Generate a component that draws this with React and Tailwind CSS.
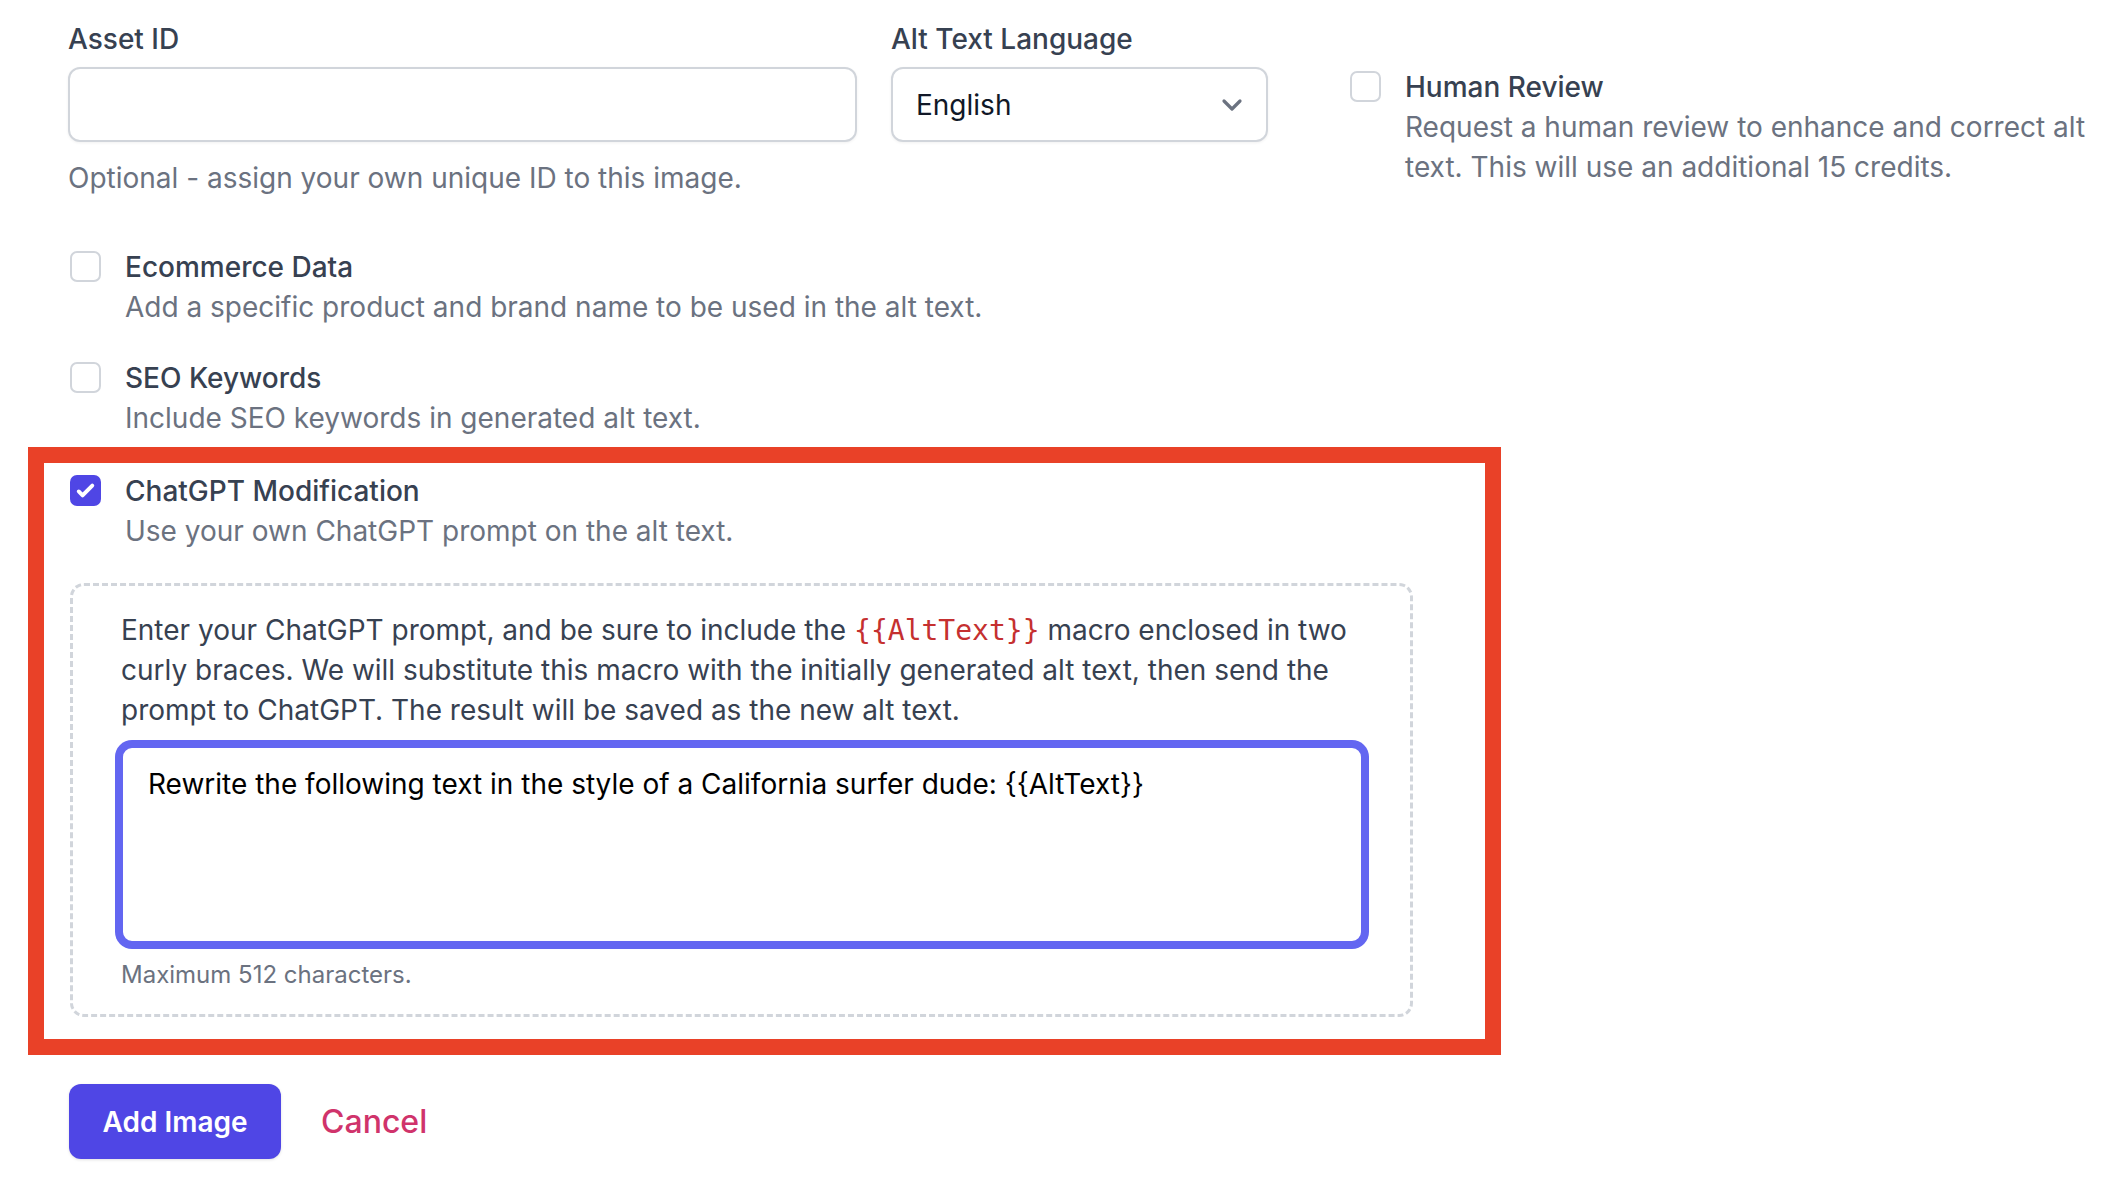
import React from "react";

function Box({ checked = false, className = "" }) {
  if (checked) {
    return (
      <span className={`mt-[4px] flex h-[31px] w-[31px] shrink-0 items-center justify-center rounded-[7px] bg-[#4f46e5] ${className}`}>
        <svg viewBox="0 0 16 16" className="h-[31px] w-[31px]" fill="#ffffff">
          <path d="M12.207 4.793a1 1 0 010 1.414l-5 5a1 1 0 01-1.414 0l-2-2a1 1 0 011.414-1.414L6.5 9.086l4.293-4.293a1 1 0 011.414 0z" />
        </svg>
      </span>
    );
  }
  return (
    <span className={`mt-[4px] block h-[31px] w-[31px] shrink-0 rounded-[7px] border-2 border-[#d1d5db] bg-white ${className}`} />
  );
}

function CheckRow({ title, desc, checked = false }) {
  return (
    <div className="flex gap-[24px]">
      <Box checked={checked} className="ml-[2px]" />
      <div>
        <div className="font-medium text-[#374151]">{title}</div>
        <div className="text-[#6b7280]">{desc}</div>
      </div>
    </div>
  );
}

export default function App() {
  return (
    <div className="min-h-screen w-full overflow-hidden bg-white font-['Inter',sans-serif] text-[28px] leading-[40px] text-[#374151]">
      <div className="pl-[68px] pt-[19px]">
        {/* top row */}
        <div className="flex">
          <div className="w-[789px] shrink-0">
            <label className="block font-medium">Asset ID</label>
            <input
              type="text"
              className="mt-[8px] block h-[75px] w-full rounded-[12px] border-2 border-[#d1d5db] bg-white px-[24px] shadow-[0_1px_3px_rgba(0,0,0,0.06)] outline-none"
            />
            <p className="mt-[16px] text-[#6b7280]">Optional - assign your own unique ID to this image.</p>
          </div>
          <div className="ml-[34px] w-[377px] shrink-0">
            <label className="block font-medium">Alt Text Language</label>
            <div className="relative mt-[8px] flex h-[75px] items-center rounded-[12px] border-2 border-[#d1d5db] bg-white pl-[23px] shadow-[0_1px_3px_rgba(0,0,0,0.06)]">
              <span className="text-[#111827]">English</span>
              <svg
                viewBox="0 0 20 20"
                fill="none"
                className="absolute right-[14px] top-1/2 h-[40px] w-[40px] -translate-y-1/2"
              >
                <path d="M6 8l4 4 4-4" stroke="#6b7280" strokeWidth="1.6" strokeLinecap="round" strokeLinejoin="round" />
              </svg>
            </div>
          </div>
          <div className="ml-[82px] mt-[48px] flex min-w-0 flex-1 gap-[24px]">
            <Box />
            <div className="min-w-0">
              <div className="font-medium text-[#374151]">Human Review</div>
              <div className="text-[#6b7280]">
                Request a human review to enhance and correct alt text. This will use an additional 15 credits.
              </div>
            </div>
          </div>
        </div>

        <div className="mt-[49px]">
          <CheckRow title="Ecommerce Data" desc="Add a specific product and brand name to be used in the alt text." />
        </div>
        <div className="mt-[31px]">
          <CheckRow title="SEO Keywords" desc="Include SEO keywords in generated alt text." />
        </div>

        {/* highlighted section */}
        <div className="-ml-[40px] mt-[9px] w-[1473px] border-[16px] border-[#e94128] pb-[22px] pl-[24px] pt-[8px]">
          <CheckRow checked title="ChatGPT Modification" desc="Use your own ChatGPT prompt on the alt text." />
          <div className="ml-[2px] mt-[32px] w-[1343px] rounded-[14px] border-[3px] border-dashed border-[#d1d5db] pb-[23px] pl-[48px] pr-[47px] pt-[24px]">
            <p className="text-[#374151]">
              Enter your ChatGPT prompt, and be sure to include the{" "}
              <code className="font-['DejaVu_Sans_Mono',monospace] text-[28px] leading-none text-[#c53030]">{"{{AltText}}"}</code>{" "}
              macro enclosed in two curly braces. We will substitute this macro with the initially generated alt text,
              then send the prompt to ChatGPT. The result will be saved as the new alt text.
            </p>
            <textarea
              readOnly
              defaultValue="Rewrite the following text in the style of a California surfer dude: {{AltText}}"
              className="mt-[16px] block h-[197px] w-full resize-none rounded-[11px] border-2 border-[#6366f1] bg-white px-[25px] py-[16px] text-[28px] leading-[40px] text-black shadow-[0_0_0_6px_#6366f1] outline-none"
            />
            <p className="mt-[16px] text-[24px] leading-[32px] text-[#6b7280]">Maximum 512 characters.</p>
          </div>
        </div>

        {/* actions */}
        <div className="mt-[29px] flex items-center gap-[40px]">
          <button className="ml-[1px] h-[75px] w-[212px] rounded-[12px] bg-[#4f46e5] text-[28px] font-semibold text-white shadow-[0_1px_3px_rgba(0,0,0,0.12)]">
            Add Image
          </button>
          <button className="text-[32px] font-medium text-[#d0336b]">Cancel</button>
        </div>
      </div>
    </div>
  );
}
